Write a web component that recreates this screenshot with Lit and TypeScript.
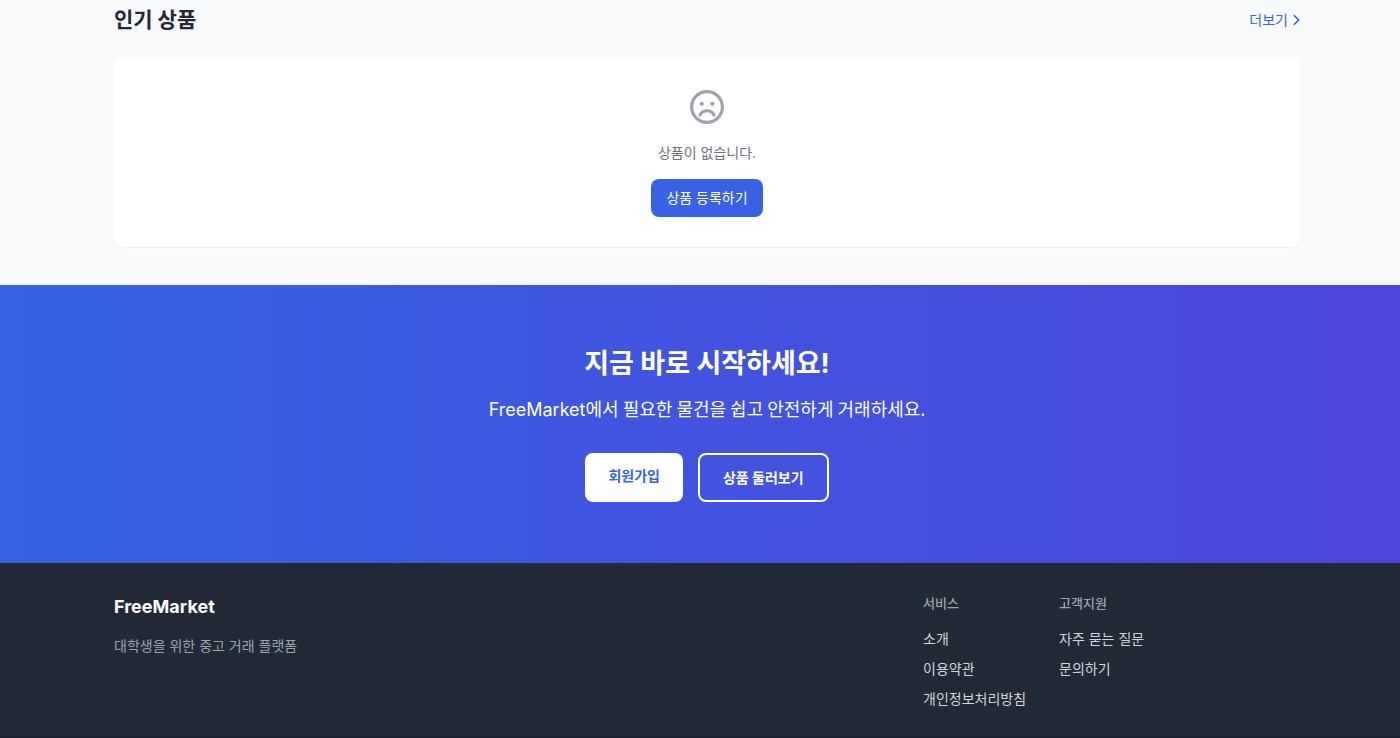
import { LitElement, html, css } from "lit";
import { customElement } from "lit/decorators.js";

interface LinkGroup {
  title: string;
  links: string[];
}

const GROUPS: LinkGroup[] = [
  { title: "서비스", links: ["소개", "이용약관", "개인정보처리방침"] },
  { title: "고객지원", links: ["자주 묻는 질문", "문의하기"] },
];

@customElement("app-root")
export class AppRoot extends LitElement {
  static styles = css`
    :host {
      display: flex;
      flex-direction: column;
      box-sizing: border-box;
      min-height: 100vh;
      background: #f9fafc;
      color: #1f2937;
      font-family: Inter, "Noto Sans CJK KR", sans-serif;
      font-size: 14px;
      line-height: 22px;
    }
    h2,
    h3,
    p,
    ul {
      margin: 0;
      padding: 0;
    }
    a {
      color: inherit;
      text-decoration: none;
    }
    button {
      font: inherit;
      border: 0;
      border-radius: 8px;
      cursor: pointer;
    }
    .popular {
      padding: 4px 100px 38px 114px;
    }
    .bar {
      display: flex;
      justify-content: space-between;
      align-items: center;
      margin-bottom: 23px;
    }
    .heading {
      font-size: 21px;
      line-height: 31px;
      font-weight: 700;
    }
    .more {
      display: flex;
      align-items: center;
      gap: 4px;
      color: #3662e3;
    }
    .chevron {
      width: 8px;
      height: 12px;
      fill: none;
      stroke: currentColor;
      stroke-width: 1.6;
      stroke-linecap: round;
      stroke-linejoin: round;
    }
    .card {
      display: flex;
      flex-direction: column;
      align-items: center;
      padding: 32px 30px 30px;
      background: #fff;
      border-radius: 8px;
      box-shadow: 0 1px 2px rgba(0, 0, 0, 0.05);
    }
    .frown {
      width: 34px;
      height: 34px;
      margin-bottom: 18px;
      fill: #9ca3af;
    }
    .empty {
      margin-bottom: 15px;
      color: #6b7280;
    }
    .register {
      padding: 8px 15px;
      background: #3662e3;
      color: #fff;
    }
    .cta {
      display: flex;
      flex-direction: column;
      align-items: center;
      padding: 62px 0 61px 14px;
      background: linear-gradient(to right, #3662e3, #4c46dc);
      color: #fff;
      text-align: center;
    }
    .cta-title {
      margin-bottom: 14px;
      font-size: 27px;
      line-height: 34px;
      font-weight: 700;
    }
    .cta-text {
      margin-bottom: 30px;
      font-family: "Noto Sans CJK KR", sans-serif;
      font-size: 18px;
      line-height: 27px;
    }
    .name {
      font-family: Inter, sans-serif;
    }
    .actions {
      display: flex;
      gap: 15px;
    }
    .action {
      display: flex;
      align-items: flex-start;
      padding: 12px 23px 11px;
      font-weight: 700;
    }
    .solid {
      background: #fff;
      color: #3662e3;
    }
    .outline {
      background: transparent;
      border: 2px solid #fff;
      color: #fff;
    }
    .footer {
      flex: 1;
      display: flex;
      justify-content: space-between;
      padding: 30px 100px 26px 114px;
      background: #212936;
      border-bottom: 1px solid #1b2130;
    }
    .brand {
      margin-bottom: 14px;
      color: #fff;
      font-size: 18px;
      line-height: 28px;
      font-weight: 700;
    }
    .tagline {
      color: #9ca3af;
    }
    .groups {
      display: grid;
      grid-template-columns: repeat(3, minmax(105px, 1fr));
      gap: 31px;
    }
    .group-title {
      margin-bottom: 15px;
      color: #9ca3af;
      font-size: 13px;
      line-height: 20px;
      font-weight: 500;
    }
    .list {
      display: flex;
      flex-direction: column;
      gap: 8px;
      list-style: none;
      color: #d1d5db;
      white-space: nowrap;
    }
  `;

  render() {
    return html`
      <section class="popular">
        <div class="bar">
          <h2 class="heading">인기 상품</h2>
          <a class="more" href="#"
            >더보기
            <svg class="chevron" viewBox="0 0 8 12" aria-hidden="true">
              <path d="M2.2 1.5 6.7 6 2.2 10.5" />
            </svg>
          </a>
        </div>
        <div class="card">
          <svg class="frown" viewBox="0 0 512 512" aria-hidden="true">
            <path
              d="M464 256a208 208 0 1 0-416 0 208 208 0 1 0 416 0zM0 256a256 256 0 1 1 512 0 256 256 0 1 1-512 0z"
            />
            <path
              d="M174.6 384.1c-4.5 12.5-18.2 18.9-30.7 14.4s-18.9-18.2-14.4-30.7C146.9 319.4 198.9 288 256 288s109.1 31.4 126.6 79.9c4.5 12.5-2 26.2-14.4 30.7s-26.2-2-30.7-14.4C328.2 358.5 297.2 336 256 336s-72.2 22.5-81.4 48.1z"
            />
            <circle cx="176.4" cy="208" r="32" />
            <circle cx="336.4" cy="208" r="32" />
          </svg>
          <p class="empty">상품이 없습니다.</p>
          <button class="register" type="button">상품 등록하기</button>
        </div>
      </section>

      <section class="cta">
        <h2 class="cta-title">지금 바로 시작하세요!</h2>
        <p class="cta-text">
          <span class="name">FreeMarket</span>에서 필요한 물건을 쉽고 안전하게
          거래하세요.
        </p>
        <div class="actions">
          <button class="action solid" type="button">회원가입</button>
          <button class="action outline" type="button">상품 둘러보기</button>
        </div>
      </section>

      <footer class="footer">
        <div>
          <h2 class="brand">FreeMarket</h2>
          <p class="tagline">대학생을 위한 중고 거래 플랫폼</p>
        </div>
        <div class="groups">
          ${GROUPS.map(
            (group) => html`
              <nav aria-label=${group.title}>
                <h3 class="group-title">${group.title}</h3>
                <ul class="list">
                  ${group.links.map(
                    (label) => html`<li><a href="#">${label}</a></li>`
                  )}
                </ul>
              </nav>
            `
          )}
        </div>
      </footer>
    `;
  }
}
